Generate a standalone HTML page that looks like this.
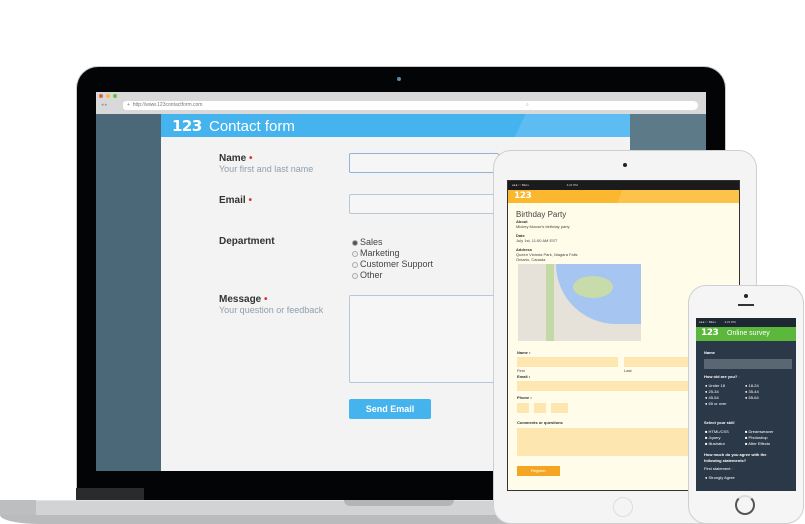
<!DOCTYPE html>
<html><head><meta charset="utf-8"><style>
*{margin:0;padding:0;box-sizing:border-box}
body{width:805px;height:524px;overflow:hidden;background:#fff;font-family:"Liberation Sans",sans-serif;position:relative}
.a{position:absolute}
.lab{font-size:10px;font-weight:bold;color:#333}
.sub{font-size:9px;color:#8fa0ad}
.r{color:#d33}
.inp{background:#f6f6f6;border:1px solid #b8c8d6;border-radius:2px}
.t{font-size:4px;color:#444}
.tb{font-size:4px;color:#333;font-weight:bold}
.pf{background:#fde6b0}
.pw{font-size:4px;color:#fff}
.pb{font-size:4px;color:#fff;font-weight:bold}
.rd{display:inline-block;width:6px;height:6px;border-radius:50%;background:#ccc;margin-right:2px;vertical-align:middle}
.logo{font-weight:900;color:#fff;letter-spacing:-0.5px;font-family:"DejaVu Sans","Liberation Sans",sans-serif}
</style></head><body>
<!-- laptop base -->
<div class="a" style="left:0;top:500px;width:560px;height:24px;background:#d2d3d5;border-radius:0 0 0 60px/0 0 0 20px;box-shadow:inset 0 1px 0 #e4e4e6"></div>
<div class="a" style="left:0;top:500px;width:36px;height:15px;background:#bdbec0"></div>
<div class="a" style="left:0;top:515px;width:560px;height:9px;background:#babbbd;border-radius:0 0 0 40px/0 0 0 9px"></div>
<div class="a" style="left:344px;top:500px;width:110px;height:6px;background:#b4b5b7;border-radius:0 0 8px 8px"></div>
<!-- laptop lid -->
<div class="a" style="left:76px;top:66px;width:650px;height:434px;background:#030405;border-radius:22px 22px 0 0;border:1px solid #c8c8c8;border-bottom:none"></div>
<div class="a" style="left:76px;top:488px;width:68px;height:12px;background:#2a2b2c"></div>
<div class="a" style="left:397px;top:77px;width:4px;height:4px;border-radius:50%;background:#5a8aa8"></div>
<!-- screen -->
<div class="a" style="left:96px;top:92px;width:610px;height:379px;background:#4a6878;overflow:hidden">
 <div class="a" style="left:0;top:0;width:610px;height:22px;background:#d9d9d9"></div>
 <div class="a" style="left:3px;top:2px;width:4px;height:4px;border-radius:50%;background:#e8584f"></div>
 <div class="a" style="left:10px;top:2px;width:4px;height:4px;border-radius:50%;background:#f5bd3e"></div>
 <div class="a" style="left:17px;top:2px;width:4px;height:4px;border-radius:50%;background:#5cc24a"></div>
 <div class="a" style="left:5px;top:10px;font-size:5px;color:#999">◂ ▸</div>
 <div class="a" style="left:27px;top:9px;width:408px;height:9px;background:#fff;border-radius:3px;font-size:5px;color:#777;padding:1px 4px">+ &nbsp;http://www.123contactform.com</div>
 <div class="a" style="left:426px;top:9px;width:176px;height:9px;background:#fff;border-radius:5px;font-size:5px;color:#aaa;padding:1px 4px">⌕</div>
 <div class="a" style="left:65px;top:22px;width:469px;height:357px;background:#f3f3f3"></div>
 <div class="a" style="left:65px;top:22px;width:469px;height:23px;background:linear-gradient(115deg,#45b3ee 0,#45b3ee 76%,#5dbdf2 76%)"></div>
 <div class="a logo" style="left:76px;top:25px;font-size:15px">123</div>
 <div class="a" style="left:113px;top:26px;font-size:15px;color:#fff">Contact form</div>
 <div class="a" style="left:534px;top:22px;width:76px;height:357px;background:#5c7a88"></div>
</div>
<!-- form -->
<div class="a lab" style="left:219px;top:153px">Name <span class="r">•</span></div>
<div class="a sub" style="left:219px;top:164px">Your first and last name</div>
<div class="a inp" style="left:349px;top:153px;width:150px;height:20px;border-color:#8fb4d8"></div>
<div class="a lab" style="left:219px;top:195px">Email <span class="r">•</span></div>
<div class="a inp" style="left:349px;top:194px;width:150px;height:20px"></div>
<div class="a lab" style="left:219px;top:236px">Department</div>
<div class="a" style="left:352px;top:237px;font-size:9px;color:#444;line-height:11px">
<div><span class="rd" style="background:#555;border:1px solid #aaa"></span>Sales</div>
<div><span class="rd" style="border:1px solid #aaa;background:#eee"></span>Marketing</div>
<div><span class="rd" style="border:1px solid #aaa;background:#eee"></span>Customer Support</div>
<div><span class="rd" style="border:1px solid #aaa;background:#eee"></span>Other</div></div>
<div class="a lab" style="left:219px;top:294px">Message <span class="r">•</span></div>
<div class="a sub" style="left:219px;top:305px">Your question or feedback</div>
<div class="a inp" style="left:349px;top:295px;width:150px;height:88px"></div>
<div class="a" style="left:349px;top:399px;width:82px;height:20px;background:#45b3ee;border-radius:2px;color:#fff;font-size:9px;font-weight:bold;text-align:center;line-height:20px">Send Email</div>
<!-- tablet -->
<div class="a" style="left:493px;top:150px;width:264px;height:374px;background:#f4f4f5;border:1px solid #cfcfd1;border-radius:18px"></div>
<div class="a" style="left:623px;top:163px;width:4px;height:4px;border-radius:50%;background:#222"></div>
<div class="a" style="left:613px;top:497px;width:20px;height:20px;border-radius:50%;border:1px solid #ddd"></div>
<div class="a" style="left:507px;top:180px;width:233px;height:311px;background:#fffde9;border:1px solid #333;overflow:hidden">
 <div class="a" style="left:0;top:0;width:233px;height:9px;background:#1b1b1b;font-size:3px;color:#ddd;padding:2px 4px">●●●○○ BELL &nbsp;&nbsp;&nbsp;&nbsp;&nbsp;&nbsp;&nbsp;&nbsp;&nbsp;&nbsp;&nbsp;&nbsp;&nbsp;&nbsp;&nbsp;&nbsp;&nbsp;&nbsp;&nbsp;&nbsp;&nbsp;&nbsp;&nbsp;&nbsp;&nbsp;&nbsp;&nbsp;&nbsp;&nbsp;&nbsp;&nbsp;&nbsp;&nbsp;&nbsp;&nbsp;&nbsp;&nbsp;&nbsp;&nbsp;&nbsp;&nbsp;&nbsp;&nbsp; 4:21 PM</div>
 <div class="a" style="left:0;top:9px;width:233px;height:13px;background:linear-gradient(110deg,#fbb72e 0,#fbb72e 48%,#fcc24a 48%)"></div>
 <div class="a logo" style="left:6px;top:10px;font-size:9px">123</div>
 <div class="a" style="left:8px;top:29px;font-size:8px;color:#444">Birthday Party</div>
 <div class="a tb" style="left:8px;top:38px">About</div><div class="a t" style="left:8px;top:43px">Mickey Mouse's birthday party</div>
 <div class="a tb" style="left:8px;top:52px">Date</div><div class="a t" style="left:8px;top:57px">July 1st, 11:00 AM EST</div>
 <div class="a tb" style="left:8px;top:66px">Address</div><div class="a t" style="left:8px;top:71px">Queen Victoria Park, Niagara Falls<br>Ontario, Canada</div>
 <div class="a" style="left:10px;top:83px;width:123px;height:77px;background:#e6e2da;overflow:hidden">
  <div class="a" style="left:38px;top:0;width:95px;height:60px;background:#a6c5f0;border-radius:0 0 0 60px"></div>
  <div class="a" style="left:55px;top:12px;width:40px;height:22px;background:#c7dcaa;border-radius:50%"></div>
  <div class="a" style="left:28px;top:0;width:8px;height:77px;background:#c3d9a6"></div>
 </div>
 <div class="a tb" style="left:9px;top:169px">Name •</div>
 <div class="a pf" style="left:9px;top:176px;width:101px;height:10px"></div>
 <div class="a pf" style="left:116px;top:176px;width:110px;height:10px"></div>
 <div class="a t" style="left:9px;top:187px">First</div><div class="a t" style="left:116px;top:187px">Last</div>
 <div class="a tb" style="left:9px;top:193px">Email •</div>
 <div class="a pf" style="left:9px;top:200px;width:220px;height:10px"></div>
 <div class="a tb" style="left:9px;top:214px">Phone •</div>
 <div class="a pf" style="left:9px;top:222px;width:12px;height:10px"></div>
 <div class="a pf" style="left:26px;top:222px;width:12px;height:10px"></div>
 <div class="a pf" style="left:43px;top:222px;width:17px;height:10px"></div>
 <div class="a tb" style="left:9px;top:239px">Comments or questions</div>
 <div class="a pf" style="left:9px;top:247px;width:220px;height:28px"></div>
 <div class="a" style="left:9px;top:285px;width:43px;height:10px;background:#f4a521;font-size:4px;color:#fff;text-align:center;line-height:10px">Register</div>
</div>
<!-- phone -->
<div class="a" style="left:688px;top:285px;width:116px;height:239px;background:#f5f5f6;border:1px solid #cfcfd1;border-radius:18px"></div>
<div class="a" style="left:744px;top:294px;width:4px;height:4px;border-radius:50%;background:#222"></div>
<div class="a" style="left:738px;top:304px;width:16px;height:2px;background:#333"></div>
<div class="a" style="left:735px;top:495px;width:20px;height:20px;border-radius:50%;border:2px solid #555;border-top-color:#ddd"></div>
<div class="a" style="left:696px;top:318px;width:100px;height:173px;background:#2b3848;overflow:hidden">
 <div class="a" style="left:0;top:0;width:100px;height:9px;background:#1e2833;font-size:3px;color:#ddd;padding:2px 3px">●●●○○ BELL &nbsp;&nbsp;&nbsp;&nbsp;&nbsp;&nbsp;&nbsp;&nbsp; 4:21 PM</div>
 <div class="a" style="left:0;top:9px;width:100px;height:14px;background:#5cb83c"></div>
 <div class="a logo" style="left:5px;top:10px;font-size:9px">123</div>
 <div class="a" style="left:31px;top:12px;font-size:7px;color:#fff">Online survey</div>
 <div class="a pb" style="left:8px;top:32px">Name</div>
 <div class="a" style="left:8px;top:41px;width:88px;height:10px;background:#5a6672"></div>
 <div class="a pb" style="left:8px;top:56px">How old are you? <span class="r">•</span></div>
 <div class="a pw" style="left:9px;top:65px;line-height:6px">● Under 18<br>● 25-34<br>● 45-54<br>● 65 or over</div>
 <div class="a pw" style="left:49px;top:65px;line-height:6px">● 18-24<br>● 35-44<br>● 55-64</div>
 <div class="a pb" style="left:8px;top:102px">Select your skill</div>
 <div class="a pw" style="left:9px;top:111px;line-height:6px">■ HTML/CSS<br>■ Jquery<br>■ Illustrator</div>
 <div class="a pw" style="left:49px;top:111px;line-height:6px">■ Dreamweaver<br>■ Photoshop<br>■ After Effects</div>
 <div class="a pb" style="left:8px;top:134px;line-height:6px">How much do you agree with the<br>following statements?</div>
 <div class="a pw" style="left:8px;top:148px">First statement <span class="r">•</span></div>
 <div class="a pw" style="left:9px;top:157px">● Strongly Agree</div>
</div>
</body></html>
